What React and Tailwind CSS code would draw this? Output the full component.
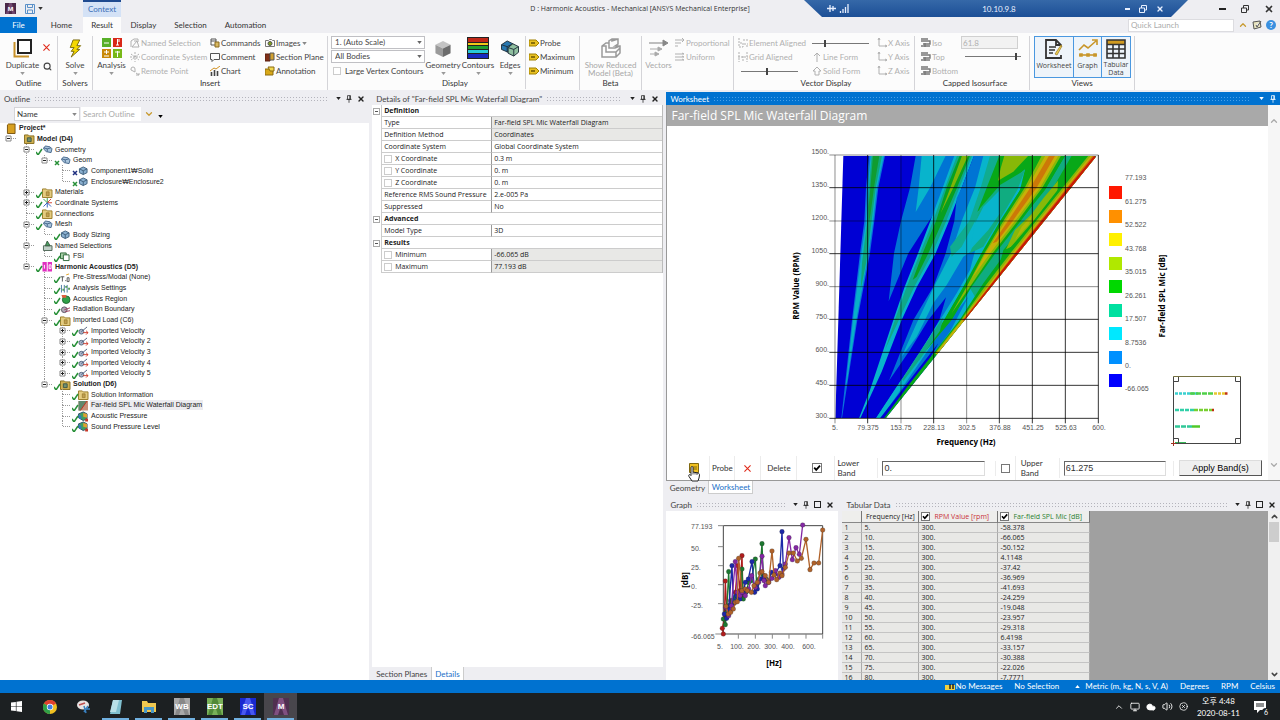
import { useState } from "react";
import { ChevronDown, ChevronUp, Cloud, Monitor, Search, Volume2, X, XCircle } from "lucide-react";

const treeData = [
  { level: 0, label: "Project*", icon: "book", bold: true },
  { level: 1, label: "Model (D4)", icon: "model", bold: true, open: true },
  { level: 2, label: "Geometry", icon: "cubes", mark: "check", open: true },
  { level: 3, label: "Geom", icon: "cubes", mark: "greenx", open: true },
  { level: 4, label: "Component1₩Solid", icon: "cube", mark: "bluex" },
  { level: 4, label: "Enclosure₩Enclosure2", icon: "cube", mark: "greenx" },
  { level: 2, label: "Materials", icon: "folder", mark: "check", open: false },
  { level: 2, label: "Coordinate Systems", icon: "axes", mark: "check", open: false },
  { level: 2, label: "Connections", icon: "folder", mark: "check" },
  { level: 2, label: "Mesh", icon: "cubes", mark: "check", open: true },
  { level: 3, label: "Body Sizing", icon: "cube", mark: "check" },
  { level: 2, label: "Named Selections", icon: "named", open: true },
  { level: 3, label: "FSI", icon: "fsi", mark: "check" },
  { level: 2, label: "Harmonic Acoustics (D5)", icon: "harmonic", mark: "check", bold: true, open: true },
  { level: 3, label: "Pre-Stress/Modal (None)", icon: "stress", mark: "check" },
  { level: 3, label: "Analysis Settings", icon: "settings", mark: "check" },
  { level: 3, label: "Acoustics Region", icon: "region", mark: "check" },
  { level: 3, label: "Radiation Boundary", icon: "radiation", mark: "check" },
  { level: 3, label: "Imported Load (C6)", icon: "folder", mark: "check", open: true },
  { level: 4, label: "Imported Velocity", icon: "velocity", mark: "check", open: false },
  { level: 4, label: "Imported Velocity 2", icon: "velocity", mark: "check", open: false },
  { level: 4, label: "Imported Velocity 3", icon: "velocity", mark: "check", open: false },
  { level: 4, label: "Imported Velocity 4", icon: "velocity", mark: "check", open: false },
  { level: 4, label: "Imported Velocity 5", icon: "velocity", mark: "check", open: false },
  { level: 3, label: "Solution (D6)", icon: "model", mark: "check", bold: true, open: true },
  { level: 4, label: "Solution Information", icon: "folder", mark: "check" },
  { level: 4, label: "Far-field SPL Mic Waterfall Diagram", icon: "waterfall", mark: "check", selected: true },
  { level: 4, label: "Acoustic Pressure", icon: "pressure", mark: "check" },
  { level: 4, label: "Sound Pressure Level", icon: "pressure", mark: "check" },
];

const details = [
  { group: "Definition" },
  { name: "Type", value: "Far-field SPL Mic Waterfall Diagram", locked: true },
  { name: "Definition Method", value: "Coordinates", locked: true },
  { name: "Coordinate System", value: "Global Coordinate System" },
  { name: "X Coordinate", value: "0.3 m", box: true },
  { name: "Y Coordinate", value: "0. m", box: true },
  { name: "Z Coordinate", value: "0. m", box: true },
  { name: "Reference RMS Sound Pressure", value: "2.e-005 Pa" },
  { name: "Suppressed", value: "No" },
  { group: "Advanced" },
  { name: "Model Type", value: "3D" },
  { group: "Results" },
  { name: "Minimum", value: "-66.065 dB", box: true, locked: true },
  { name: "Maximum", value: "77.193 dB", box: true, locked: true },
];

const splValues = [
  "-58.378", "-66.065", "-50.152", "4.1148", "-37.42", "-36.969", "-41.693", "-24.259",
  "-19.048", "-23.957", "-29.318", "6.4198", "-33.157", "-30.388", "-22.026", "-7.7771",
];

const legend = [
  ["#ff1800", "77.193"],
  ["#ff9000", "61.275"],
  ["#fff000", "52.522"],
  ["#b0e800", "43.768"],
  ["#00d800", "35.015"],
  ["#00e0a0", "26.261"],
  ["#00e8ff", "17.507"],
  ["#0090ff", "8.7536"],
  ["#0000ff", "0."],
];

const rpmTicks = ["1500.", "1350.", "1200.", "1050.", "900.", "750.", "600.", "450.", "300."];
const hzTicks = ["5.", "79.375", "153.75", "228.13", "302.5", "376.88", "451.25", "525.63", "600."];
const gridStops = [195, 293, 393, 491, 590, 688, 787, 886, 985];

// contour bands of the waterfall, painted back to front
const bands = [
  // first order
  ["#0a70dc", "297,197 345,197 325,293 313,393 300,490 262,690 216,985 214,985 246,690 270,490 283,393 288,293"],
  ["#08b0c8", "302,197 342,197 321,293 309,400 296,490 259,690 230,880 228,880 249,690 274,490 287,400 293,293"],
  ["#10a878", "305,197 336,197 317,293 304,400 288,520 272,600 276,520 291,400 297,293"],
  ["#109c30", "309,197 328,197 312,293 302,370 297,400 296,350 301,293"],
  // second order
  ["#0074d4", "437,197 420,293 393,393 372,490 356,634 415,490 487,378 525,293 570,197"],
  ["#08b4cc", "455,197 446,293 437,366 480,293 527,197"],
  ["#08b4cc", "553,197 518,293 481,393 444,490 404,590 370,690 300,900 267,985 271,985 335,845 395,690 441,590 497,490 537,393 575,293 612,197"],
  ["#10a888", "561,197 525,293 489,393 450,490 410,590 378,680 345,780 389,685 433,590 487,490 529,393 568,293 606,197"],
  ["#08a020", "569,197 530,293 498,393 458,490 428,570 440,560 475,490 518,393 561,293 600,197"],
  ["#80b408", "576,197 541,293 512,370 550,293 594,197"],
  // field between the second and third orders
  ["#0074d4", "612,197 575,293 560,325 553,393 527,490 490,590 430,690 357,872 420,780 475,690 528,622 508,690 450,790 400,870 320,985 347,985 980,197"],
  ["#08b4cc", "640,197 615,293 575,393 543,490 492,590 440,700 395,800 440,740 490,640 530,585 580,500 617,475 600,540 560,610 510,690 450,785 318,985 347,985 980,197"],
  ["#10ac90", "660,197 632,293 598,393 540,470 545,500 575,470 612,400 640,350 690,310 700,197"],
  ["#08a818", "688,197 650,293 622,365 690,305 765,238 750,300 700,390 645,480 590,575 535,670 500,740 980,197"],
  ["#10ac80", "765,240 690,285 630,355 615,400 620,430 600,490 640,470 690,388 742,300"],
  ["#08b4cc", "690,300 640,350 615,400 600,480 655,420 690,370"],
  ["#88b808", "703,197 692,235 684,272 730,245 775,197"],
  // below the third order
  ["#10ac80", "885,197 825,300 760,380 690,460 600,590 500,740 430,850 565,700 655,590 690,520 700,480 760,410 840,310 905,197"],
  ["#08b4cc", "600,595 540,690 430,850 345,985 347,985 500,790 570,690 615,620"],
  ["#0074d4", "595,620 530,700 440,830 350,960 347,985 450,845 540,725"],
  // third order
  ["#08a818", "795,197 755,293 690,393 634,490 580,590 522,690 465,785 545,690 605,590 676,490 752,393 827,293 885,197"],
  ["#88b808", "815,197 764,293 700,393 643,490 590,590 545,670 600,590 668,490 743,393 817,293 873,197"],
  ["#c8b008", "826,197 771,293 706,393 650,484 606,565 660,490 735,393 810,293 865,197"],
  ["#cc7808", "837,197 781,293 714,393 668,460 680,455 728,393 800,293 855,197"],
  ["#88b808", "864,272 820,325 785,372 735,420 708,478 755,455 800,393 840,345 862,315"],
  ["#b0b808", "790,372 755,410 735,450 775,405"],
  // low speed tail
  ["#10a888", "520,680 450,785 395,870 400,874 452,805 510,722"],
  ["#08b4cc", "395,868 318,985 326,985 375,915 402,874"],
  ["#0000d4", "505,760 450,830 400,895 330,985 346,985 400,916 460,842"],
  // leading edge
  ["#08a818", "950,197 868,293 790,393 706,490 640,580 569,690 420,880 342,985 350,985 985,205"],
  ["#88b808", "955,197 878,293 798,393 721,490 648,585 573,690 495,790 500,795 985,205"],
  ["#c8b008", "962,197 885,293 805,393 728,490 652,590 576,690 498,790 503,795 985,205"],
  ["#cc7008", "968,197 890,293 810,393 733,490 656,590 578,690 580,700 985,205"],
  ["#c81808", "973,197 894,293 814,393 736,490 658,590 581,690 590,695 985,205"],
];

const graphSeries = [
  { color: "#b01c1c", points: "190,555 187,538 193,510 196,396 200,480 206,470 212,455 216,480 220,462 226,430 233,350 240,425 246,320 249,440" },
  { color: "#1c7830", points: "190,510 196,527 200,490 206,368 210,470 218,455 226,445 236,448 243,448 246,360 250,450 258,430 266,400 274,395 286,330 290,410 298,390 306,284 310,380 318,390" },
  { color: "#1c28a8", points: "193,495 200,508 206,480 216,350 220,465 230,440 240,450 250,430 256,400 265,390 276,338 284,430 292,420 300,390 312,385 326,395 334,370 345,375 360,350 366,248 370,360" },
  { color: "#8428a4", points: "197,475 206,500 214,470 226,338 232,430 240,440 246,430 256,440 266,420 275,380 286,415 296,400 306,322 312,395 316,410 326,400 336,388 346,365 357,385 366,375 376,345 387,266 397,332 408,296 418,316 428,228" },
  { color: "#b0622a", points: "198,472 205,495 212,490 220,480 226,460 232,458 236,328 246,425 256,420 262,425 274,430 282,410 292,400 300,372 306,368 316,380 326,400 336,306 342,378 350,392 360,372 366,380 376,355 387,312 400,312 412,336 424,328 438,271 450,362 462,342 476,342 488,243" },
];

const waterfallAxis = "fill-[#555] font-['Liberation_Sans',sans-serif] text-[7px]";
const chartTitle = "fill-black font-['Noto_Sans',sans-serif] text-[8px] font-bold";

const Caret = ({ className = "" }) => (
  <svg viewBox="0 0 6 4" className={`h-[3px] w-[5px] fill-current ${className}`}>
    <path d="M0 0h6L3 4z" />
  </svg>
);

const Cross = ({ className }) => (
  <svg viewBox="0 0 8 8" className={`fill-none stroke-[#e02818] ${className}`}>
    <path d="M.5.5l7 7M7.500.5l-7 7" strokeWidth="1.200" />
  </svg>
);

const Pin = () => (
  <svg viewBox="0 0 8 10" className="h-[8px] w-[6px] fill-none stroke-current">
    <path d="M2 .5h4v5H2zM5 .5v5M.5 5.5h7M4 6v4" />
  </svg>
);

const PanelHeader = ({ title, active, max }) => (
  <div
    className={
      active
        ? "flex h-[13px] shrink-0 items-center bg-[#0072d0] px-1 text-white"
        : "flex h-[13px] shrink-0 items-center bg-[#eeeef2] px-1 text-[#444]"
    }
  >
    <span className="whitespace-nowrap pr-1 text-[8px] leading-[12px]">{title}</span>
    <span
      className={
        active
          ? "mr-2 h-[5px] min-w-0 flex-1 bg-[radial-gradient(#4aa0e8_25%,transparent_30%)] bg-[size:3px_3px]"
          : "mr-2 h-[5px] min-w-0 flex-1 bg-[radial-gradient(#b4b4bc_25%,transparent_30%)] bg-[size:3px_3px]"
      }
    />
    <span className={active ? "flex items-center gap-[6px]" : "flex items-center gap-[5px] text-[#222]"}>
      <button aria-label="Panel menu"><Caret /></button>
      <button aria-label="Auto hide"><Pin /></button>
      {max && <button aria-label="Maximize" className="h-[7px] w-[7px] border border-current" />}
      {!active && (
        <button aria-label="Close panel"><X className="h-[8px] w-[8px]" strokeWidth={4} /></button>
      )}
    </span>
  </div>
);

const Check = ({ label, checked = false, size = "size-[9px]" }) => (
  <span className="relative inline-flex shrink-0">
    <input
      type="checkbox"
      aria-label={label}
      defaultChecked={checked}
      className={`peer appearance-none border border-[#777] bg-white ${size}`}
    />
    <svg viewBox="0 0 9 9" className="pointer-events-none absolute inset-0 hidden fill-none stroke-black stroke-[1.6] peer-checked:block">
      <path d="M2 4.2 3.8 6.2 7.2 2.4" />
    </svg>
  </span>
);

/* ---------- ribbon ---------- */

const Group = ({ label, width, children }) => (
  <div className={`flex shrink-0 flex-col border-r border-[#d4d4d8] ${width}`}>
    <div className="flex h-[42px] items-start">{children}</div>
    <div className="whitespace-nowrap text-center text-[8px] leading-[10px] text-[#333]">{label}</div>
  </div>
);

const BigButton = ({ icon, label, width, caret, disabled }) => (
  <button
    disabled={disabled}
    className={`flex shrink-0 flex-col items-center leading-[8px] disabled:text-[#a8a8a8] ${width}`}
  >
    <span className="flex h-[24px] items-center">{icon}</span>
    <span className="pt-[1px] leading-[8px]">{label}</span>
    {caret && <Caret className="mt-[3px] text-[#999]" />}
  </button>
);

const SmallButton = ({ icon, label, disabled, caret }) => (
  <button
    disabled={disabled}
    className="flex h-[14px] items-center gap-[1px] whitespace-nowrap leading-[14px] disabled:text-[#b0b0b0]"
  >
    <svg viewBox="0 0 10 10" className="size-[10px] shrink-0 fill-none stroke-current">
      {smallIcons[icon]}
    </svg>
    {label}
    {caret && <Caret className="text-[#888]" />}
  </button>
);

const Slider = ({ label, value, width }) => (
  <input
    type="range"
    aria-label={label}
    defaultValue={value}
    className={`h-[14px] appearance-none bg-[linear-gradient(#777,#777)] bg-[length:100%_1px] bg-center bg-no-repeat [&::-webkit-slider-thumb]:h-[7px] [&::-webkit-slider-thumb]:w-[2px] [&::-webkit-slider-thumb]:appearance-none [&::-webkit-slider-thumb]:bg-[#444] ${width}`}
  />
);

const tag = (
  <>
    <path d="M0 2h7l3 3-3 3H0z" fill="#e8c020" stroke="#a08000" />
    <path d="M2 5h4" stroke="#6a5400" strokeWidth="1.5" />
  </>
);

const smallIcons = {
  named: <path d="M1 9V3l3-2h4v3M2 9l5-6 2 6zM4 3h3" />,
  coord: <path d="M5 0v10M1 2l8 6M9 2 1 8M0 5h10" strokeDasharray="2 1" />,
  remote: <path d="M1 3a2 2 0 1 1 4 0v3L1 4zM6 7l3 2M6 9h3V7" />,
  commands: (
    <>
      <path d="M1 1h5v6H1zM1 3h5" stroke="#555" />
      <path d="M5 4h4v5H5z" fill="#d8b860" stroke="#8a6a20" />
    </>
  ),
  comment: <path d="M.5 1.5h9v6H4l-2 2v-2H.5z" stroke="#555" />,
  chart: (
    <>
      <path d="M1.5 10V6M4.5 10V4M7.5 10V5" stroke="#444" strokeWidth="1.6" />
      <path d="M0 5l4-3 2 1 4-3" stroke="#d09020" />
    </>
  ),
  images: (
    <>
      <path d="M.5 2.5h3l1-1h2l1 1h2v6h-9z" stroke="#777" />
      <circle cx="5" cy="5.5" r="2" fill="#80a020" stroke="#555" />
    </>
  ),
  section: (
    <>
      <path d="M0 2h5v7H0z" fill="#803018" stroke="#5a2010" />
      <path d="M5 1h4v7H5z" fill="#d0a030" stroke="#555" />
    </>
  ),
  annotation: (
    <>
      <path d="M0 3h8v6H0z" fill="#d8a818" stroke="#8a6a10" />
      <path d="M3 1h6v4H5z" fill="#f0d850" stroke="#8a6a10" />
    </>
  ),
  tag,
  proportional: <path d="M0 2h9M7 0l2 2-2 2M0 5h6M0 8h3" />,
  uniform: <path d="M0 2h9M0 5h9M0 8h9M7 1l2 1M7 4l2 1M7 7l2 1" />,
  element: <path d="M1 0v9h4V5H1M5 2h5M6 6h4M8 8h2" strokeDasharray="2 1" />,
  grid: <path d="M1 0v10M5 4v5M9 0v10M0 5h10" strokeDasharray="2 1" />,
  line: <path d="M5 10V1M2 4l3-3 3 3" />,
  solid: <path d="M3 9V5H1l4-4 4 4H7v4z" />,
  axis: <path d="M2 0v8h8M1 2l1-2 1 2M8 7l2 1-2 1" />,
  iso: <path d="M0 1h7M0 3h9v3H2M0 8h9M4 5v4" stroke="#777" strokeWidth="1.4" />,
};

const icons = {
  duplicate: (
    <svg viewBox="0 0 20 20" className="size-[20px] fill-none">
      <path d="M1.5 4v14.5H16" stroke="#c8922a" strokeWidth="2" />
      <path d="M5 2h13v13H5z" fill="#fff" stroke="#222" strokeWidth="2" />
    </svg>
  ),
  solve: (
    <svg viewBox="0 0 14 20" className="h-[19px] w-[14px]">
      <path d="M5 1h7L9 7h4L9 11h3L3 19l3-6H3l3-4H2z" fill="#f4d800" stroke="#7a6a10" />
    </svg>
  ),
  analysis: (
    <svg viewBox="0 0 20 20" className="size-[20px]">
      <path d="M0 0h9v9H0z" fill="#58b028" />
      <path d="M11 0h9v9h-9z" fill="#d82818" />
      <path d="M0 11h9v9H0z" fill="#c88808" />
      <path d="M11 11h9v9h-9z" fill="#78b818" />
      <path d="M2 5h5M15.500 1v6M14 7h3M2 14h5M4.500 12v4M2 18h5M15.500 13v6M13 14h5M17 1v3" stroke="#fff" />
    </svg>
  ),
  geometry: (
    <svg viewBox="0 0 16 18" className="h-[17px] w-[16px]">
      <path d="M8 1l8 4-8 4-8-4z" fill="#c4c4c4" />
      <path d="M0 5l8 4v9l-8-4z" fill="#9a9a9a" />
      <path d="M16 5 8 9v9l8-4z" fill="#6c6c6c" />
    </svg>
  ),
  contours: (
    <svg viewBox="0 0 22 22" className="size-[22px]">
      <path d="M0 0h22v22H0z" fill="#222" />
      <path d="M1 1h20v4H1z" fill="#c02818" />
      <path d="M1 6h20v2H1z" fill="#f0c818" />
      <path d="M1 9h20v3H1z" fill="#20a030" />
      <path d="M1 13h20v3H1z" fill="#28c8d8" />
      <path d="M1 17h20v4H1z" fill="#1828c0" />
    </svg>
  ),
  edges: (
    <svg viewBox="0 0 20 18" className="h-[17px] w-[20px]" stroke="#20303c">
      <path d="M1 5l6-4 6 3v6l-5 3-7-3z" fill="#2878b0" />
      <path d="M1 5l6 2 6-3M7 7v6" fill="none" />
      <path d="M8 8l5-4 6 3v6l-5 4-6-3z" fill="#90c0a0" />
      <path d="M8 8l6 2 5-3M14 10v7" fill="none" />
    </svg>
  ),
  reduced: (
    <svg viewBox="0 0 20 20" className="size-[20px] fill-none stroke-[#999]" strokeWidth="1.5">
      <path d="M1 8l4-3h3V3l3-2h6v5l-3 2h5v7l-4 4H1zM8 5v5h6l5-2M1 8h4v6h10v5M15 14l4-4M11 1v2l6-2" />
    </svg>
  ),
  vectors: (
    <svg viewBox="0 0 20 18" className="h-[18px] w-[20px] fill-[#aaa] stroke-[#aaa]">
      <path d="M0 4h14" strokeWidth="1.5" />
      <path d="M14 1l5 3-5 3z" fill="#888" stroke="#888" />
      <path d="M1 10h9M9 8l4 2-4 2zM1 15h5M6 13l4 2-4 2z" />
    </svg>
  ),
  worksheet: (
    <svg viewBox="0 0 18 20" className="h-[20px] w-[18px] fill-none">
      <path d="M12 19H1V1h10l5 5v2M16 16v3h-5M11 1v5h5" stroke="#333" strokeWidth="1.8" />
      <path d="M4 8h7M4 11h6M4 14h4" stroke="#333" strokeWidth="1.5" />
      <path d="M10 15l6-9 1 1-5 9z" fill="#f0d050" stroke="#a08030" strokeWidth=".8" />
    </svg>
  ),
  graph: (
    <svg viewBox="0 0 20 20" className="size-[20px] fill-none stroke-[#c8962a]" strokeWidth="1.6">
      <path d="M1 11l5-5 4 3 8-7M14 1h5v5" />
      <path d="M1 16h18" />
      <path d="M2 15h2v2H2zM9 15h2v2H9zM16 15h2v2h-2z" />
    </svg>
  ),
  tabular: (
    <svg viewBox="0 0 20 20" className="size-[20px] fill-none">
      <path d="M1 1h18v4H1z" fill="#d09a20" />
      <path d="M1 1h18v18H1zM1 5.500h18M1 10h18M1 14.500h18M7 5v14M13 5v14" stroke="#333" strokeWidth="1.6" />
    </svg>
  ),
};

const ComboBox = ({ label, value }) => (
  <span className="relative flex h-[14px] w-[94px]">
    <select aria-label={label} className="h-[13px] w-full appearance-none border border-[#c0c0c4] bg-white px-[3px] text-[8px] leading-[11px]">
      <option>{value}</option>
    </select>
    <Caret className="pointer-events-none absolute right-[3px] top-[5px] text-[#666]" />
  </span>
);

const Ribbon = () => (
  <div className="flex h-[57px] shrink-0 overflow-hidden bg-[#fcfcfc] pt-[3px] text-[8px] text-[#444]">
    <Group label="Outline" width="w-[58px]">
      <BigButton icon={icons.duplicate} label="Duplicate" width="w-[41px] pl-1" caret />
      <div className="flex flex-col gap-[11px] pl-[2px] pt-[8px]">
        <button aria-label="Delete"><Cross className="size-[7px]" /></button>
        <button aria-label="Find"><Search className="size-[9px]" strokeWidth={3} /></button>
      </div>
    </Group>
    <Group label="Solvers" width="w-[35px]">
      <BigButton icon={icons.solve} label="Solve" width="w-full" caret />
    </Group>
    <Group label="Insert" width="w-[235px]">
      <BigButton icon={icons.analysis} label="Analysis" width="w-[37px]" caret />
      <div className="w-[80px]">
        <SmallButton icon="named" label="Named Selection" disabled />
        <SmallButton icon="coord" label="Coordinate System" disabled />
        <SmallButton icon="remote" label="Remote Point" disabled />
      </div>
      <div className="w-[55px]">
        <SmallButton icon="commands" label="Commands" />
        <SmallButton icon="comment" label="Comment" />
        <SmallButton icon="chart" label="Chart" />
      </div>
      <div>
        <SmallButton icon="images" label="Images" caret />
        <SmallButton icon="section" label="Section Plane" />
        <SmallButton icon="annotation" label="Annotation" />
      </div>
    </Group>
    <div className="flex h-[53px] w-[198px] shrink-0 flex-col border-r border-[#d4d4d8] pl-[3px]">
      <div className="flex h-[42px]">
        <div className="w-[94px]">
          <ComboBox label="Scale" value="1. (Auto Scale)" />
          <ComboBox label="Scope" value="All Bodies" />
          <label className="flex h-[14px] items-center gap-1 whitespace-nowrap pl-[2px]">
            <input type="checkbox" className="size-[8px] appearance-none border border-[#ccc] bg-white" />
            Large Vertex Contours
          </label>
        </div>
        <BigButton icon={icons.geometry} label="Geometry" width="w-[36px]" caret />
        <BigButton icon={icons.contours} label="Contours" width="w-[34px]" caret />
        <BigButton icon={icons.edges} label="Edges" width="w-[30px]" caret />
      </div>
      <div className="pl-[54px] text-center leading-[10px] text-[#333]">Display</div>
    </div>
    <Group label="" width="w-[54px] pl-[3px]">
      <div>
        <SmallButton icon="tag" label="Probe" />
        <SmallButton icon="tag" label="Maximum" />
        <SmallButton icon="tag" label="Minimum" />
      </div>
    </Group>
    <Group label="Beta" width="w-[62px]">
      <BigButton icon={icons.reduced} label={<>Show Reduced<br />Model (Beta)</>} width="w-full" disabled />
    </Group>
    <Group label="" width="w-[92px]">
      <BigButton icon={icons.vectors} label="Vectors" width="w-[33px]" disabled />
      <div>
        <SmallButton icon="proportional" label="Proportional" disabled />
        <SmallButton icon="uniform" label="Uniform" disabled />
      </div>
    </Group>
    <Group label="Vector Display" width="w-[181px] pl-1">
      <div className="flex w-[74px] flex-col">
        <SmallButton icon="element" label="Element Aligned" disabled />
        <SmallButton icon="grid" label="Grid Aligned" disabled />
        <Slider label="Grid density" value={46} width="ml-[3px] w-[57px]" />
      </div>
      <div className="flex w-[65px] flex-col">
        <Slider label="Vector length" value={22} width="w-[57px]" />
        <SmallButton icon="line" label="Line Form" disabled />
        <SmallButton icon="solid" label="Solid Form" disabled />
      </div>
      <div>
        <SmallButton icon="axis" label="X Axis" disabled />
        <SmallButton icon="axis" label="Y Axis" disabled />
        <SmallButton icon="axis" label="Z Axis" disabled />
      </div>
    </Group>
    <Group label="Capped Isosurface" width="w-[115px] pl-[6px]">
      <div className="w-[40px]">
        <SmallButton icon="iso" label="Iso" disabled />
        <SmallButton icon="iso" label="Top" disabled />
        <SmallButton icon="iso" label="Bottom" disabled />
      </div>
      <div className="flex flex-col">
        <input aria-label="Iso value" disabled defaultValue="61.8" className="h-[13px] w-[57px] border border-[#d0d0d0] bg-[#f2f2f2] px-[1px] text-[#b0b0b0]" />
        <Slider label="Iso level" value={92} width="ml-1 w-[56px]" />
      </div>
    </Group>
    <Group label="Views" width="w-[105px] px-1">
      <div className="flex h-[42px] w-[97px] divide-x divide-[#4a98e0] border border-[#4a98e0] bg-[#eef4fa] font-['Open_Sans',sans-serif] text-[7px]">
        <BigButton icon={icons.worksheet} label="Worksheet" width="w-[39px]" />
        <BigButton icon={icons.graph} label="Graph" width="w-[28px]" />
        <BigButton icon={icons.tabular} label={<>Tabular<br />Data</>} width="w-[28px]" />
      </div>
    </Group>
  </div>
);

const TitleArea = () => {
  const tabs = ["Home", "Result", "Display", "Selection", "Automation"];
  const tabStyles = {
    Home: "w-[43px]",
    Result: "w-[38px] bg-[#fcfcfc]",
    Display: "w-[45px]",
    Selection: "w-[49px]",
    Automation: "w-[61px]",
  };
  return (
    <header className="relative shrink-0 bg-[#eeeef2] text-[8px] text-[#333]">
      <div className="flex h-[17px] items-center">
        <div className="flex w-[83px] items-center gap-[7px] pl-[5px]">
          <AnsysLogo className="size-[11px]" />
          <button aria-label="Save" className="ml-[2px]">
            <svg viewBox="0 0 10 10" className="size-[10px] fill-none stroke-[#5a90c8]">
              <path d="M.5.5h9v9h-9zM2.500.5v3h5v-3M2.500 9.500V6h5v3.500" />
            </svg>
          </button>
          <Caret className="-ml-1" />
        </div>
        <div className="h-full w-[38px] border-t-2 border-[#1e4a90] bg-[#d4e2f6] text-center leading-[15px] text-[#3a70b8]">Context</div>
        <h1 className="flex-1 whitespace-nowrap text-center font-['Open_Sans',sans-serif] text-[7px] leading-[17px]">
          D : Harmonic Acoustics - Mechanical [ANSYS Mechanical Enterprise]
        </h1>
        <div className="flex w-[121px] items-center justify-end gap-[15px] pr-[6px]">
          <button aria-label="Minimize" className="h-[2px] w-[7px] bg-[#222]" />
          <button aria-label="Restore"><RestoreIcon /></button>
          <button aria-label="Close"><X className="size-[10px]" strokeWidth={4} /></button>
        </div>
      </div>
      <div className="flex h-[16px] items-center">
        <button className="h-full w-[37px] bg-[#0072d0] text-white">File</button>
        <div className="flex h-full pl-[3px]">
          {tabs.map((tab) => (
            <button key={tab} className={tabStyles[tab]}>{tab}</button>
          ))}
        </div>
        <div className="ml-auto flex items-center gap-[4px] pr-1">
          <input aria-label="Quick Launch" placeholder="Quick Launch" className="h-[13px] w-[106px] border border-[#dcdce0] bg-white px-[2px] placeholder:text-[#aaa]" />
          <ChevronUp className="size-[10px] text-[#c89a30]" strokeWidth={3} />
          <svg viewBox="0 0 10 10" className="size-[10px] fill-[#e8e4c0] stroke-[#555]">
            <path d="M1 2l7-1 1 6-7 2zM4 5l1 2 4-6" />
          </svg>
          <span className="flex size-[10px] items-center justify-center rounded-full bg-[#3a90e0] font-bold text-white">?</span>
        </div>
      </div>
      {/* remote desktop connection bar */}
      <div className="absolute right-[92px] top-0 flex h-[17px] w-[30%] items-center bg-linear-to-b from-[#3568a8] to-[#1c4f96] pl-[23px] pr-[24px] text-[#e8f0ff] [clip-path:polygon(0_0,100%_0,calc(100%_-_17px)_100%,18px_100%)]">
        <svg viewBox="0 0 22 9" className="h-[9px] w-[22px] fill-none stroke-current" strokeWidth="1.3">
          <path d="M0 4.500h9M3 1v7M6 2v5M13.500 9V7M16 9V5M18.500 9V3M21 9V0" />
        </svg>
        <span className="flex-1 pl-[24px] text-center leading-[16px]">10.10.9.8</span>
        <span className="flex items-center gap-[9px]">
          <button aria-label="Minimize session" className="h-[2px] w-[5px] bg-current" />
          <button aria-label="Restore session"><RestoreIcon /></button>
          <button aria-label="Close session"><X className="size-[8px]" strokeWidth={4} /></button>
        </span>
      </div>
    </header>
  );
};

const RestoreIcon = () => (
  <svg viewBox="0 0 8 8" className="size-[8px] fill-none stroke-current">
    <path d="M.5 3h5v4.500h-5zM2.500 3V.5h5V5h-2" />
  </svg>
);

const AnsysLogo = ({ className }) => (
  <svg viewBox="0 0 18 20" className={className} preserveAspectRatio="none">
    <path d="M0 0h18v20H0z" fill="#4a2848" />
    <path d="M7 0h4l6 20h-5L9 9 6 20H1z" fill="#8a5a88" opacity=".6" />
    <text x="9" y="14" textAnchor="middle" className="fill-white font-['Liberation_Sans',sans-serif] text-[11px] font-bold">M</text>
  </svg>
);

/* ---------- outline ---------- */

const treeIcons = {
  book: <path d="M2 0h7v10H1V1z" fill="#d8a020" stroke="#7a5410" />,
  model: (
    <>
      <path d="M0 1h4l1 1h5v8H0z" fill="#d0b050" stroke="#8a7020" />
      <path d="M3 4h4v4H3z" fill="#709070" stroke="#405848" />
    </>
  ),
  folder: (
    <>
      <path d="M0 1h4l1 1h5v8H0z" fill="#e4cc80" stroke="#9a7c28" />
      <path d="M4 4h3v4H4z" fill="#c0a050" stroke="#8a6a20" strokeWidth=".6" />
    </>
  ),
  cube: (
    <>
      <path d="M5 1l4 2v4L5 9 1 7V3z" fill="#8ab0d0" stroke="#40607c" />
      <path d="M1 3l4 2 4-2M5 5v4" fill="none" stroke="#40607c" />
    </>
  ),
  cubes: (
    <>
      <path d="M3 1l5 1 2 2-1 4-5-1-3-3z" fill="#a8c4dc" stroke="#48688c" />
      <path d="M1 3l4 1 4-1M5 4v3" fill="none" stroke="#48688c" />
    </>
  ),
  axes: (
    <>
      <path d="M5 5V0M5 5 1 1" stroke="#38a048" />
      <path d="M5 5h5M5 5l4-4" stroke="#d04030" />
      <path d="M5 5 1 9M5 5v5M5 5l4 4" stroke="#3060c0" />
    </>
  ),
  named: (
    <>
      <path d="M1 5h9v5H1z" fill="#c0d0c8" stroke="#506858" />
      <path d="M3 5l2-5 3 5z" fill="#48a060" stroke="#385840" />
    </>
  ),
  fsi: (
    <>
      <path d="M0 1h6v6H0z" fill="#a8d0a8" stroke="#2c6838" />
      <path d="M3 3h6v6H3z" fill="#fff" stroke="#2c6838" />
    </>
  ),
  harmonic: (
    <>
      <path d="M0 0h10v10H0z" fill="#e030c0" />
      <path d="M5 0v10M2 3v4M7 3h2v4H7z" stroke="#fff" fill="none" />
    </>
  ),
  stress: (
    <>
      <path d="M0 4h4M2 4v5M5 8h1M7 5h2v4H7z" stroke="#555" fill="none" />
      <path d="M6 2l3-1" stroke="#e0a020" />
    </>
  ),
  settings: (
    <>
      <path d="M1 1v8M4 1v8M7 1v8" stroke="#4878a0" />
      <path d="M2 6h2M5 3h2M8 5h2" stroke="#58a058" strokeWidth="2" />
    </>
  ),
  region: (
    <>
      <circle cx="6" cy="6" r="4" fill="#30a048" stroke="#206830" />
      <path d="M1 1h5v3H2z" fill="#e06040" />
    </>
  ),
  radiation: (
    <>
      <circle cx="4" cy="5" r="3" fill="#b0a8b8" stroke="#605868" />
      <path d="M4 5l6-2M5 7l5-1" stroke="#a04060" />
    </>
  ),
  velocity: (
    <>
      <circle cx="3" cy="6" r="2.500" fill="#a8b4c8" stroke="#586880" />
      <path d="M3 6l6-5" stroke="#506080" />
      <path d="M5 7h5M8 5l2 2-2 2" stroke="#d03828" fill="none" />
    </>
  ),
  waterfall: (
    <>
      <path d="M0 0h10v10H0z" fill="#c89078" />
      <path d="M0 0h9L2 10H0z" fill="#60886c" />
      <path d="M9 0 2 10" stroke="#c03020" />
    </>
  ),
  pressure: (
    <>
      <path d="M0 2l5-2 4 2v5L5 9 0 6z" fill="#40a060" stroke="#30506c" />
      <path d="M5 1l4 1v4L5 5z" fill="#e0a030" />
      <path d="M0 3l3 1v4L0 6z" fill="#3878c0" />
      <path d="M7 7h3v3H7z" fill="#c83828" />
    </>
  ),
};

// a level's line carries on past a row while a sibling is still to come
const lineContinues = (index, level) => {
  for (let i = index + 1; i < treeData.length; i++) {
    if (treeData[i].level < level) return false;
    if (treeData[i].level === level) return true;
  }
  return false;
};

const TreeRow = ({ row, index }) => {
  const marks = {
    check: <path d="M0 8l2 3 4-6" stroke="#289038" strokeWidth="1.5" />,
    greenx: <path d="M1 6l4 4M5 6l-4 4" stroke="#289038" strokeWidth="1.5" />,
    bluex: <path d="M1 6l4 4M5 6l-4 4" stroke="#203080" strokeWidth="1.5" />,
  };
  return (
    <li className="flex min-h-0 items-center">
      {Array.from({ length: Math.max(row.level - 1, 0) }, (_, i) => (
        <span key={i} className="flex h-full w-[18px] shrink-0 pl-2">
          {i > 0 && lineContinues(index, i + 1) && <span className="border-l border-dotted border-[#999]" />}
        </span>
      ))}
      {row.level > 0 && (
        <svg viewBox="0 0 18 11" className="h-[11px] w-[18px] shrink-0 fill-none stroke-[#999]">
          {row.level > 1 && <path d="M8.500 0v5.500" strokeDasharray="1 1" />}
          {lineContinues(index, row.level) && <path d="M8.500 5v6" strokeDasharray="1 1" />}
          <path d="M9 5.500h8" strokeDasharray="1 1" />
          {row.open !== undefined && (
            <>
              <path d="M6 3h5v5H6z" fill="#fff" stroke="#888" />
              <path d={row.open ? "M7 5.500h3" : "M7 5.500h3M8.500 4v3"} stroke="#222" />
            </>
          )}
        </svg>
      )}
      <svg viewBox="0 0 18 11" className="h-[11px] w-[18px] shrink-0 fill-none">
        <g transform="translate(6.500 1) scale(.95)">{treeIcons[row.icon]}</g>
        {marks[row.mark]}
      </svg>
      <span
        className={
          row.selected
            ? "whitespace-nowrap bg-[#ececf0] px-px"
            : row.bold
              ? "whitespace-nowrap px-px font-bold"
              : "whitespace-nowrap px-px"
        }
      >
        {row.label}
      </span>
    </li>
  );
};

const Outline = () => (
  <section className="flex min-w-0 flex-[370] flex-col bg-white">
    <PanelHeader title="Outline" />
    <div className="flex h-[18px] shrink-0 items-center bg-[#eeeef2] pl-[9px] text-[8px]">
      <span className="relative mr-px flex w-[71px] pl-[5px]">
        <select aria-label="Search by" className="h-[14px] w-full appearance-none border border-[#d4d4d8] bg-white px-[2px] text-[#333]">
          <option>Name</option>
        </select>
        <Caret className="pointer-events-none absolute right-[3px] top-[6px] text-[#888]" />
      </span>
      <input aria-label="Search Outline" placeholder="Search Outline" className="h-[14px] w-[60px] bg-white px-[2px] placeholder:text-[#aaa]" />
      <ChevronDown className="ml-[3px] size-[10px] text-[#c89a30]" strokeWidth={3} />
      <Caret className="ml-1 mt-1" />
    </div>
    <ul className="grid h-[309px] auto-rows-fr font-['Liberation_Sans','Noto_Sans_CJK_KR',sans-serif] text-[7px] leading-[10px] text-[#222]">
      {treeData.map((row, i) => (
        <TreeRow key={row.label} row={row} index={i} />
      ))}
    </ul>
  </section>
);

/* ---------- details ---------- */

const Details = () => (
  <section className="flex min-w-0 flex-[292] flex-col bg-white">
    <PanelHeader title={'Details of "Far-field SPL Mic Waterfall Diagram"'} />
    <table className="w-full table-fixed border-separate border-spacing-0 border-r border-[#bbb] font-['Open_Sans',sans-serif] text-[7px] leading-[11px] text-[#222]">
      <colgroup>
        <col className="w-[9px]" />
        <col className="w-[110px]" />
        <col />
      </colgroup>
      <tbody>
        {details.map((row) =>
          row.group ? (
            <tr key={row.group}>
              <td className="h-[12px] p-0">
                <button aria-label={`Collapse ${row.group}`} className="ml-px flex size-[7px] items-center justify-center border border-[#aaa]">
                  <span className="h-px w-[3px] bg-[#555]" />
                </button>
              </td>
              <td colSpan={2} className="border-b border-l border-[#ccc] px-[2px] py-0 font-bold">{row.group}</td>
            </tr>
          ) : (
            <tr key={row.name}>
              <td className="h-[12px] p-0" />
              <td className="whitespace-nowrap border-b border-l border-[#ccc] px-[2px] py-0">
                <label className="flex items-center gap-[3px]">
                  {row.box && <input type="checkbox" className="size-[8px] appearance-none border border-[#ccc]" />}
                  {row.name}
                </label>
              </td>
              <td
                className={
                  row.locked
                    ? "border-b border-l border-b-[#ccc] border-l-[#999] bg-[#e8e8e6] px-[2px] py-0"
                    : "border-b border-l border-b-[#ccc] border-l-[#999] px-[2px] py-0"
                }
              >
                {row.value}
              </td>
            </tr>
          )
        )}
      </tbody>
    </table>
    <div className="mt-auto flex h-[13px] items-stretch bg-[#eeeef2] text-[8px] leading-[12px] text-[#444]">
      <button className="px-1">Section Planes</button>
      <button className="border-x border-[#ccc] bg-white px-[3px] text-[#1a70c8]">Details</button>
    </div>
  </section>
);

/* ---------- worksheet ---------- */

const WaterfallChart = () => (
  <svg viewBox="785 145 460 305" className="ml-auto mr-[23px] block h-[305px] w-[460px]" role="img">
    <defs>
      <clipPath id="wedge">
        <path d="M220 197H980L347 985H196z" />
      </clipPath>
    </defs>
    <g transform="translate(770 90) scale(.33333)">
      <g clipPath="url(#wedge)">
        <path d="M195 197h790v788H195z" fill="#0000d4" />
        {bands.map(([fill, points], i) => (
          <polygon key={i} points={points} fill={fill} />
        ))}
      </g>
      {gridStops.map((stop, i) => (
        <g key={stop} stroke="#000" strokeWidth="3">
          <path d={`M178 ${stop}H985`} strokeOpacity={i === 0 || i === 2 || i === 4 ? 0.45 : 0.8} />
          <path d={`M${stop} 195V1000`} strokeOpacity={i === 0 || i === 2 || i === 4 ? 0.45 : 0.8} />
        </g>
      ))}
    </g>
    {rpmTicks.map((tick, i) => (
      <text key={tick} x="829" y={154 + i * 33} textAnchor="end" className={waterfallAxis}>{tick}</text>
    ))}
    {hzTicks.map((tick, i) => (
      <text key={tick} x={835 + i * 33} y="430" textAnchor="middle" className={waterfallAxis}>{tick}</text>
    ))}
    <text x="966" y="445" textAnchor="middle" className={chartTitle}>Frequency (Hz)</text>
    <text transform="translate(799 286) rotate(-90)" textAnchor="middle" className={chartTitle}>RPM Value (RPM)</text>
    <text transform="translate(1165 296) rotate(-90)" textAnchor="middle" className={chartTitle}>Far-field SPL Mic [dB]</text>
    {legend.map(([color, value], i) => (
      <g key={value}>
        <rect x="1109" y={186 + Math.round(i * 23.5)} width="13" height="13" fill={color} />
        <text x="1125" y={180 + Math.round(i * 23.5)} className={waterfallAxis}>{value}</text>
      </g>
    ))}
    <text x="1125" y="391" className={waterfallAxis}>-66.065</text>
    {/* overview thumbnail */}
    <g fill="none" strokeWidth="2.500">
      <path d="M1175 393.500h23" stroke="#38d0d0" strokeDasharray="3 1" />
      <path d="M1190 393.500h24" stroke="#50d048" strokeDasharray="5 1" />
      <path d="M1214 393.500h12" stroke="#e8c830" strokeDasharray="3 1" />
      <path d="M1225 393.500h2.500M1212 410h2" stroke="#c03010" />
      <path d="M1175 410h20" stroke="#30d0a8" strokeDasharray="4 1" />
      <path d="M1194 410h18" stroke="#78d030" strokeDasharray="4 1" />
      <path d="M1175 426.500h18" stroke="#30c898" strokeDasharray="5 1" />
      <path d="M1192 426.500h8" stroke="#50c828" />
      <path d="M1175 442.500h11" stroke="#38b858" strokeWidth="1" />
    </g>
    <g fill="none" stroke="#444">
      <path d="M1173.500 376.500h67v67h-67z" />
      <path d="M1178.500 377v4.500h-5M1235.500 377v4.500h5M1178.500 443v-4.500h-5M1235.500 443v-4.500h5" />
      <path d="M1173.500 376.500h67" stroke="#a8a040" strokeDasharray="1 1" />
      <path d="M1171 443.500h5M1173.500 441v5" stroke="#a03020" />
    </g>
  </svg>
);

const HandCursor = () => (
  <svg viewBox="0 0 12 16" className="pointer-events-none absolute left-[6px] top-[10px] z-10 h-[16px] w-[12px]">
    <path d="M3 1.500c0-1.200 2-1.200 2 0V6l5 1c1 .3 1.500 1 1.500 2L11 12l-1 3H4L1 10.500c-1-1.500.5-2.500 1.500-1.500L3 9.500z" fill="#fff" stroke="#222" />
    <path d="M5 6v2.500M7 6.500v2M9 7v2" stroke="#222" strokeWidth=".8" />
  </svg>
);

const BandBar = () => {
  const [lower, setLower] = useState("0.");
  const [upper, setUpper] = useState("61.275");
  const field =
    "h-[15px] w-full border border-b-[#ddd] border-l-[#666] border-r-[#ddd] border-t-[#666] bg-white px-[1px] font-['Liberation_Sans',sans-serif] text-[9px]";

  return (
    <div className="flex h-[24px] shrink-0 items-center divide-x divide-[#ececec] pl-[15px] text-[8px] leading-[10px] text-[#333]">
      <div className="relative flex h-full w-[28px] items-center pl-[7px]">
        <svg viewBox="0 0 10 10" className="size-[10px]">
          <path d="M.5.5h9v9h-9z" fill="#f0c020" stroke="#806810" />
          <path d="M2 4h6M2 6h6" stroke="#806810" />
        </svg>
        <HandCursor />
      </div>
      <button className="h-full w-[25px]">Probe</button>
      <button aria-label="Delete probe" className="flex h-full w-[26px] items-center justify-center">
        <Cross className="size-[7px]" />
      </button>
      <button className="h-full w-[36px]">Delete</button>
      <div className="flex h-full w-[38px] items-center justify-end pr-[12px]">
        <Check label="Use lower band" checked size="size-[10px]" />
      </div>
      <label htmlFor="lower-band" className="w-[43px] pl-[2px]">Lower<br />Band</label>
      <span className="min-w-0 flex-1 pl-[4px] pr-[10px]">
        <input id="lower-band" value={lower} onChange={(e) => setLower(e.target.value)} className={field} />
      </span>
      <div className="flex h-full w-[20px] items-center justify-center">
        <Check label="Use upper band" size="size-[9px]" />
      </div>
      <label htmlFor="upper-band" className="w-[44px] pl-[5px]">Upper<br />Band</label>
      <span className="min-w-0 flex-1 pl-[4px] pr-[7px]">
        <input id="upper-band" value={upper} onChange={(e) => setUpper(e.target.value)} className={field} />
      </span>
      <div className="pl-[5px] pr-[6px]">
        <button className="h-[16px] w-[83px] border border-b-[#555] border-l-[#ddd] border-r-[#555] border-t-[#ddd] bg-[#f0f0f0] font-['Liberation_Sans',sans-serif] text-[9px] text-black">
          Apply Band(s)
        </button>
      </div>
    </div>
  );
};

const Worksheet = () => (
  <section className="flex shrink-0 flex-col">
    <PanelHeader title="Worksheet" active />
    <div className="flex border-b border-l border-[#999] bg-white">
      <div className="min-w-0 flex-1">
        <h2 className="h-[21px] whitespace-nowrap bg-[#a9a9a9] pl-[4px] font-['Open_Sans',sans-serif] text-[12px] leading-[22px] text-white">
          Far-field SPL Mic Waterfall Diagram
        </h2>
        <div className="pb-[6px] pt-[19px]">
          <WaterfallChart />
        </div>
        <BandBar />
      </div>
      <div className="flex w-[12px] shrink-0 flex-col items-center justify-between bg-[#f6f6f6] pb-[10px] pt-[11px] text-[#aaa]">
        <ChevronUp className="size-[10px]" strokeWidth={3} />
        <ChevronDown className="size-[10px]" strokeWidth={3} />
      </div>
    </div>
    <div className="flex h-[17px] shrink-0 items-start bg-[#eeeef2] text-[8px] leading-[12px] text-[#444]">
      <button className="h-[13px] w-[42px]">Geometry</button>
      <button className="h-[13px] w-[45px] border border-t-0 border-[#ccc] bg-white text-[#1a70c8]">Worksheet</button>
    </div>
  </section>
);

/* ---------- graph + tabular data ---------- */

const GraphPanel = () => (
  <section className="flex w-[172px] shrink-0 flex-col bg-white">
    <PanelHeader title="Graph" max />
    <svg viewBox="666 510 172 168" className="h-[168px] w-[172px]" role="img">
      <g transform="translate(660 448) scale(.33333)" fill="none">
        <path d="M190 230H488V555H190z" stroke="#444" strokeWidth="3" />
        <path d="M174 230h16M174 293h16M174 350h16M174 407h16M174 464h16M166 555h24M235 555v14M286 555v14M337 555v14M387 555v14M438 555v14M488 555v14" stroke="#888" strokeWidth="3" />
        {graphSeries.map((series) => (
          <g key={series.color} fill={series.color}>
            <polyline points={series.points} fill="none" stroke={series.color} strokeWidth="4" />
            {series.points.split(" ").map((point) => {
              const [x, y] = point.split(",");
              return <circle key={point} cx={x} cy={y} r="7" stroke="#222" strokeOpacity=".5" strokeWidth="1.500" />;
            })}
          </g>
        ))}
      </g>
      {[["77.193", 528], ["50.", 550], ["25.", 569], ["0.", 588], ["-25.", 607], ["-66.065", 638]].map(([tick, y]) => (
        <text key={tick} x="691" y={y} className={waterfallAxis}>{tick}</text>
      ))}
      {[["5.", 720], ["100.", 737], ["200.", 754], ["300.", 771], ["400.", 788], ["600.", 809]].map(([tick, x]) => (
        <text key={tick} x={x} y="648" textAnchor="middle" className={waterfallAxis}>{tick}</text>
      ))}
      <text x="774" y="665" textAnchor="middle" className={chartTitle}>[Hz]</text>
      <text transform="translate(688 579) rotate(-90)" textAnchor="middle" className={chartTitle}>[dB]</text>
    </svg>
  </section>
);

const TabularPanel = () => {
  const head = "h-[12px] overflow-hidden whitespace-nowrap border-b border-r border-b-[#888] border-r-[#777] bg-[#eeeeec] p-0 font-normal leading-[10px]";
  const cell = "h-[10px] border-b border-r border-b-[#c4c4c4] border-r-[#aaa] bg-[#e8e8e6] py-0 pl-[2px] pr-0 leading-[9px]";
  return (
    <section className="flex min-w-0 flex-1 flex-col">
      <PanelHeader title="Tabular Data" max />
      <div className="flex min-h-0 flex-1 bg-[#a0a0a0]">
        <div className="min-w-0 flex-1 overflow-hidden">
          <table className="w-[248px] table-fixed border-separate border-spacing-0 font-['Open_Sans',sans-serif] text-[7px] text-[#222]">
            <colgroup>
              <col className="w-[20px]" />
              <col className="w-[57px]" />
              <col className="w-[79px]" />
              <col className="w-[92px]" />
            </colgroup>
            <thead>
              <tr>
                <th className={head} />
                <th className={head}>Frequency [Hz]</th>
                <th className={head}>
                  <span className="flex items-center gap-1 pl-[2px] text-[#c83038]">
                    <Check label="Show RPM Value" checked />RPM Value [rpm]
                  </span>
                </th>
                <th className={head}>
                  <span className="flex items-center gap-1 pl-[2px] text-[#288030]">
                    <Check label="Show Far-field SPL Mic" checked />Far-field SPL Mic [dB]
                  </span>
                </th>
              </tr>
            </thead>
            <tbody>
              {splValues.map((spl, i) => (
                <tr key={spl}>
                  <td className={cell}>{i + 1}</td>
                  <td className={cell}>{(i + 1) * 5}.</td>
                  <td className={cell}>300.</td>
                  <td className={cell}>{spl}</td>
                </tr>
              ))}
            </tbody>
          </table>
        </div>
        <div className="flex w-[12px] shrink-0 flex-col items-center bg-[#f0f0f0] text-[#444]">
          <ChevronUp className="my-px size-[9px]" strokeWidth={4} />
          <span className="h-[20px] w-[10px] bg-[#cdcdcd]" />
          <ChevronDown className="mb-px mt-auto size-[9px]" strokeWidth={4} />
        </div>
      </div>
    </section>
  );
};

/* ---------- status bar + taskbar ---------- */

const StatusBar = () => (
  <footer className="flex h-[13px] shrink-0 items-center justify-end gap-[12px] bg-[#0072d0] pr-[5px] text-[8px] leading-[13px] text-white">
    <span className="flex items-center gap-px">
      <svg viewBox="0 0 10 8" className="h-[8px] w-[10px]">
        <path d="M0 2h10v5H0z" fill="#f0d040" />
        <path d="M5 1v5M8 1v5" stroke="#222" strokeWidth="1.500" />
      </svg>
      No Messages
    </span>
    <span>No Selection</span>
    <span className="flex items-center gap-[5px] pl-1">
      <Caret className="rotate-180" />
      Metric (m, kg, N, s, V, A)
    </span>
    <span>Degrees</span>
    <span>RPM</span>
    <span>Celsius</span>
  </footer>
);

const AppTile = ({ text, fill, shade }) => (
  <svg viewBox="0 0 16 17" className="h-[17px] w-[16px]">
    <path d="M0 0h16v17H0z" fill={fill} />
    <path d="M6 0h4l5 17h-4L8 8 5 17H1z" fill={shade} />
    <text x="8" y="11" textAnchor="middle" className="fill-white font-['Liberation_Sans',sans-serif] text-[8px] font-bold">{text}</text>
  </svg>
);

const apps = [
  {
    name: "Start",
    icon: (
      <svg viewBox="0 0 12 12" className="size-[11px] fill-white">
        <path d="M0 1.700 5.300 1v4.700H0zM6 .9 12 0v5.700H6zM0 6.300h5.300V11L0 10.300zM6 6.300h6V12l-6-.9z" />
      </svg>
    ),
  },
  {
    name: "Chrome",
    icon: (
      <svg viewBox="0 0 14 14" className="size-[14px]">
        <circle cx="7" cy="7" r="7" fill="#f0c020" />
        <path d="M7 7 .9 3.500A7 7 0 0 1 13.100 3.500z" fill="#e04030" />
        <path d="M7 7 .9 3.500A7 7 0 0 0 7 14z" fill="#30a048" />
        <circle cx="7" cy="7" r="3.200" fill="#fff" />
        <circle cx="7" cy="7" r="2.500" fill="#4080e0" />
      </svg>
    ),
  },
  {
    name: "Snipping Tool",
    icon: (
      <svg viewBox="0 0 14 14" className="size-[14px]">
        <ellipse cx="7" cy="5" rx="6" ry="4.500" fill="#e8e4e4" />
        <path d="M3 5l6-2" stroke="#c05050" strokeWidth="1.500" />
        <path d="M8 6l2 7M12 6l-4 6M9 9h5" stroke="#3880c0" strokeWidth="1.500" />
      </svg>
    ),
  },
  {
    name: "Notepad",
    running: true,
    icon: (
      <svg viewBox="0 0 14 14" className="size-[14px]">
        <path d="M4 0h9l-2 14H1z" fill="#80c0d0" />
        <path d="M4 0h6L7 12H1z" fill="#b8e0e8" />
      </svg>
    ),
  },
  {
    name: "File Explorer",
    running: true,
    icon: (
      <svg viewBox="0 0 14 14" className="size-[14px]">
        <path d="M0 1h5l1 2h8v9H0z" fill="#f0c850" />
        <path d="M2 7h10v6H9v-3H5v3H2z" fill="#4898c8" />
      </svg>
    ),
  },
  { name: "Workbench", running: true, icon: <AppTile text="WB" fill="#a8a8a8" shade="#888888" /> },
  { name: "Electronics Desktop", running: true, icon: <AppTile text="EDT" fill="#78b058" shade="#508838" /> },
  { name: "SpaceClaim", running: true, icon: <AppTile text="SC" fill="#1828d0" shade="#4858f0" /> },
  { name: "Mechanical", running: true, active: true, icon: <AppTile text="M" fill="#503050" shade="#805080" /> },
];

const Taskbar = () => (
  <nav className="flex h-[27px] shrink-0 items-stretch bg-[#1c2022] text-white">
    {apps.map((app) => (
      <button
        key={app.name}
        aria-label={app.name}
        className={`flex w-[33px] flex-col items-center justify-between pt-[5px] ${app.active ? "bg-[#48464c]" : ""}`}
      >
        <span className="flex h-[17px] items-center">{app.icon}</span>
        {app.running && <span className="h-[2px] w-[27px] bg-[#70b0e0]" />}
      </button>
    ))}
    <div className="ml-auto flex items-center gap-[6px] pr-[14px]">
      <ChevronUp className="size-[10px]" />
      <Monitor className="size-[10px]" />
      <Cloud className="size-[10px] fill-white" />
      <Volume2 className="size-[11px]" />
      <XCircle className="size-[9px]" />
      <div className="whitespace-nowrap px-[3px] text-center text-[8px] leading-[12px]">
        오후 4:48
        <br />
        2020-08-11
      </div>
      <span className="relative flex pl-[5px]">
        <svg viewBox="0 0 12 12" className="size-[12px] fill-white">
          <path d="M0 0h12v9H6l-3 3V9H0z" />
          <path d="M2 3h8M2 5h8" stroke="#1c2022" />
        </svg>
        <span className="absolute -bottom-[3px] -right-[4px] size-[8px] rounded-full bg-[#1c2022] text-center text-[7px] leading-[8px]">6</span>
      </span>
    </div>
  </nav>
);

const App = () => {
  return (
    <div className="flex h-screen flex-col overflow-hidden bg-[#eeeef2] font-['Lato','Noto_Sans_CJK_KR',sans-serif]">
      <TitleArea />
      <Ribbon />
      <main className="flex min-h-0 flex-1 gap-[3px] pt-[2px]">
        <Outline />
        <Details />
        <div className="flex min-w-0 flex-[615] flex-col">
          <Worksheet />
          <div className="flex min-h-0 flex-1 gap-1">
            <GraphPanel />
            <TabularPanel />
          </div>
        </div>
      </main>
      <StatusBar />
      <Taskbar />
    </div>
  );
};

export default App;
